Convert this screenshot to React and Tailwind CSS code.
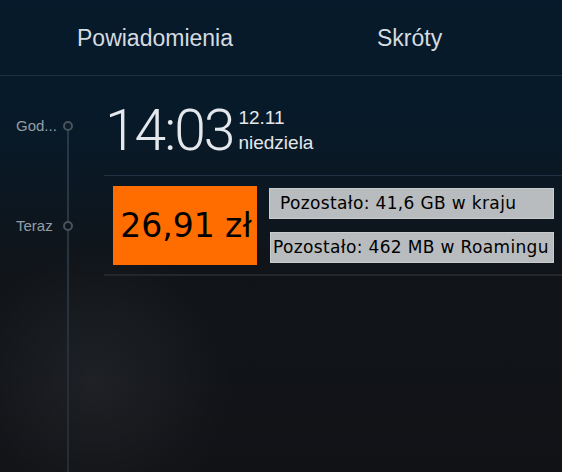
export default function App() {
  return (
    <div
      className="relative w-[562px] h-[472px] overflow-hidden bg-[linear-gradient(180deg,#061a2b_0px,#071a2a_110px,#0c1721_200px,#101419_270px,#111216_472px)]"
      style={{ fontFamily: '"Liberation Sans", Arial, sans-serif' }}
    >
      <div className="pointer-events-none absolute inset-0 bg-[radial-gradient(circle_at_95px_380px,rgba(255,255,255,0.06)_0px,rgba(255,255,255,0)_140px)]" />
      <div className="relative flex h-[76px] items-center border-b border-[#1c3242] text-[23px] text-[#d6dbe0]">
        <div className="ml-[77px] pt-[2px]">Powiadomienia</div>
        <div className="ml-[144px] pt-[2px]">Skróty</div>
      </div>
      <div className="relative">
        <div className="absolute left-[67px] top-[54px] h-[400px] w-[2px] bg-[linear-gradient(180deg,#27394a,#262a30)]" />
        <div className="flex h-[100px]">
          <div className="relative flex w-[104px] items-center justify-between pl-4 pr-[31px]">
            <span className="text-[15px] text-[#959ea6]">God...</span>
            <span className="h-[10px] w-[10px] rounded-full border-2 border-[#48535c] bg-[#0a1b29]" />
          </div>
          <div className="flex flex-1 items-start border-b border-[#1f3343] pt-[26px] text-[#e4e8ec]">
            <span
              className="ml-[1px] text-[57px] font-light leading-none tracking-[-2px]"
              style={{ fontFamily: 'Roboto, "Liberation Sans", sans-serif' }}
            >
              14:03
            </span>
            <div className="ml-[5px] mt-[3px] flex flex-col text-[19px] leading-[25px]">
              <span>12.11</span>
              <span>niedziela</span>
            </div>
          </div>
        </div>
        <div className="flex h-[100px]">
          <div className="relative flex w-[104px] items-center justify-between pl-4 pr-[31px]">
            <span className="text-[15px] text-[#959ea6]">Teraz</span>
            <span className="h-[10px] w-[10px] rounded-full border-2 border-[#48535c] bg-[#0d1620]" />
          </div>
          <div
            className="flex flex-1 items-start border-b-2 border-[#24272c] pt-[10px] pl-[9px]"
            style={{ fontFamily: '"DejaVu Sans", sans-serif' }}
          >
            <div className="flex h-[79px] w-[144px] items-center justify-center bg-[#ff6d00] pl-[2px] text-[33px] text-black">
              26,91 zł
            </div>
            <div className="ml-[12px] flex flex-col">
              <div className="mt-[2px] flex h-[31px] w-[285px] items-center border border-[#c9cccd] bg-[#b9bcbe] pl-[10px] text-[17px] tracking-[0.35px] text-black">
                Pozostało: 41,6 GB w kraju
              </div>
              <div className="ml-[1px] mt-[13px] flex h-[31px] w-[284px] items-center border border-[#c9cccd] bg-[#b9bcbe] pl-[2px] text-[17px] tracking-[0.35px] text-black">
                Pozostało: 462 MB w Roamingu
              </div>
            </div>
          </div>
        </div>
      </div>
    </div>
  );
}
